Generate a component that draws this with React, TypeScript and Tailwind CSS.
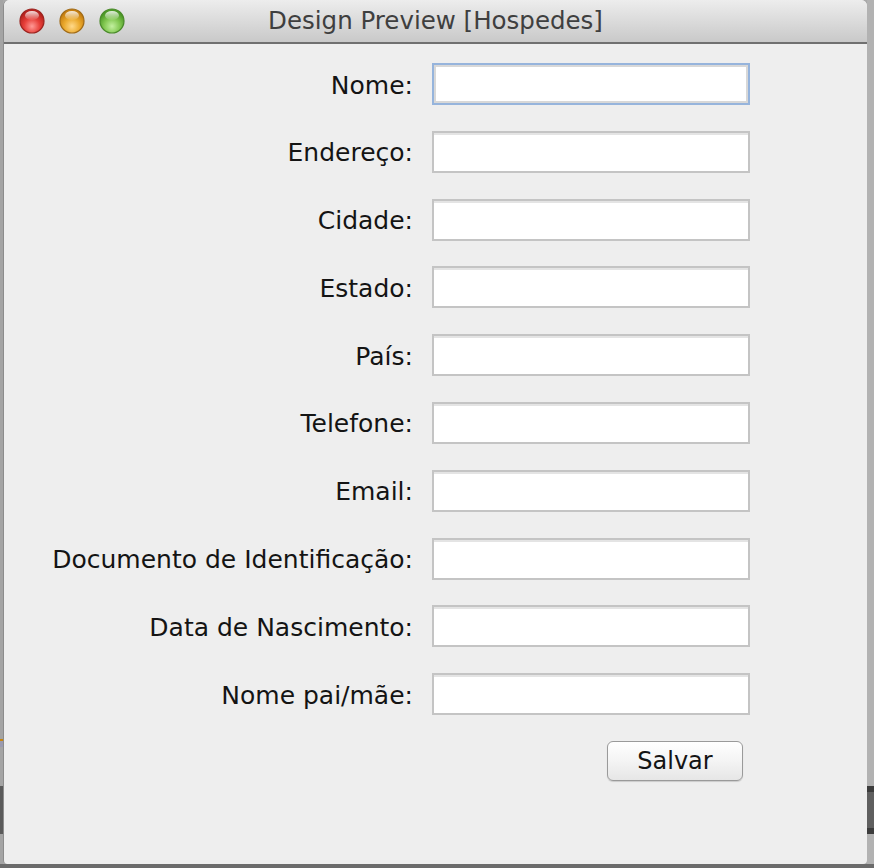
const FIELDS = [
  'Nome:',
  'Endereço:',
  'Cidade:',
  'Estado:',
  'País:',
  'Telefone:',
  'Email:',
  'Documento de Identificação:',
  'Data de Nascimento:',
  'Nome pai/mãe:',
]

function Light({ id, hi, mid, lo, edge }: { id: string; hi: string; mid: string; lo: string; edge: string }) {
  return (
    <svg width="26" height="26" viewBox="0 0 26 26">
      <defs>
        <radialGradient id={`g-${id}`} cx="50%" cy="72%" r="60%">
          <stop offset="0%" stopColor={hi} />
          <stop offset="55%" stopColor={mid} />
          <stop offset="100%" stopColor={lo} />
        </radialGradient>
        <linearGradient id={`s-${id}`} x1="0" y1="0" x2="0" y2="1">
          <stop offset="0%" stopColor="#ffffff" stopOpacity="0.85" />
          <stop offset="100%" stopColor="#ffffff" stopOpacity="0.05" />
        </linearGradient>
      </defs>
      <circle cx="13" cy="13" r="12" fill={`url(#g-${id})`} stroke={edge} strokeWidth="1.2" />
      <ellipse cx="13" cy="7.5" rx="7" ry="4.5" fill={`url(#s-${id})`} />
    </svg>
  )
}

export default function App() {
  return (
    <div className="w-[874px] h-[868px] flex flex-col bg-[#a9a9a9] overflow-hidden" style={{ fontFamily: '"DejaVu Sans", sans-serif' }}>
      <div className="flex flex-1">
        {/* backdrop strip left */}
        <div className="w-[3px] flex flex-col bg-[#a4a4a4]">
          <div className="h-[739px]" />
          <div className="h-[2px] bg-[#c8860e]" />
          <div className="h-[6px] bg-[#9a9ab0]" />
          <div className="h-[39px]" />
          <div className="h-[48px] bg-[#5a5a5a]" />
        </div>

        <div className="w-[864px] h-[864px] flex flex-col border-l border-[#8c8c8c] rounded-t-[6px] rounded-b-[4px] overflow-hidden bg-[#eeeeee]">
          {/* title bar */}
          <div className="relative h-[44px] flex items-center justify-center bg-gradient-to-b from-[#ededed] to-[#c9c9c9] border-b-2 border-[#707070]">
            <div className="absolute left-[15px] top-[8px] flex gap-[14px]">
              <Light id="r" hi="#ff9a96" mid="#e7403a" lo="#b8221d" edge="#9b2420" />
              <Light id="y" hi="#ffd98a" mid="#ebaa2e" lo="#c77f10" edge="#a06b18" />
              <Light id="g" hi="#c3f0a0" mid="#83c852" lo="#4d9a27" edge="#4a8a2a" />
            </div>
            <span className="text-[24.5px] text-[#3f3f3f] pt-[1px]">Design Preview [Hospedes]</span>
          </div>

          {/* form */}
          <div className="grid grid-cols-[409px_318px] gap-x-[19px] gap-y-[25.8px] items-center pt-[19px]">
            {FIELDS.map((label, i) => (
              <div key={label} className="contents">
                <div className="text-right text-[25px] text-[#141414] leading-none pt-[2px]">{label}</div>
                <div
                  className={
                    i === 0
                      ? 'h-[42px] bg-white border-2 border-[#96b4dc] shadow-[inset_0_0_0_2px_#d8d8d8]'
                      : 'h-[42px] bg-white border-2 border-[#c4c4c4] shadow-[inset_0_2px_0_#e4e4e4]'
                  }
                />
              </div>
            ))}
            <div className="col-start-2 ml-[175px]">
              <button className="w-[136px] h-[40px] rounded-[6px] border border-[#9a9a9a] bg-gradient-to-b from-[#ffffff] via-[#f4f4f4] to-[#e6e6e6] shadow-[0_1px_1px_rgba(0,0,0,0.15)] text-[24px] text-[#141414] leading-none">
                Salvar
              </button>
            </div>
          </div>
        </div>

        {/* backdrop strip right */}
        <div className="flex-1 flex flex-col bg-[#b2b2b2]">
          <div className="h-[786px]" />
          <div className="h-[6px] bg-[#3c3c3c]" />
          <div className="h-[36px] bg-[#5f5f5f]" />
          <div className="h-[6px] bg-[#3c3c3c]" />
        </div>
      </div>
      <div className="h-[4px] bg-[#6b6b6b]" />
    </div>
  )
}
